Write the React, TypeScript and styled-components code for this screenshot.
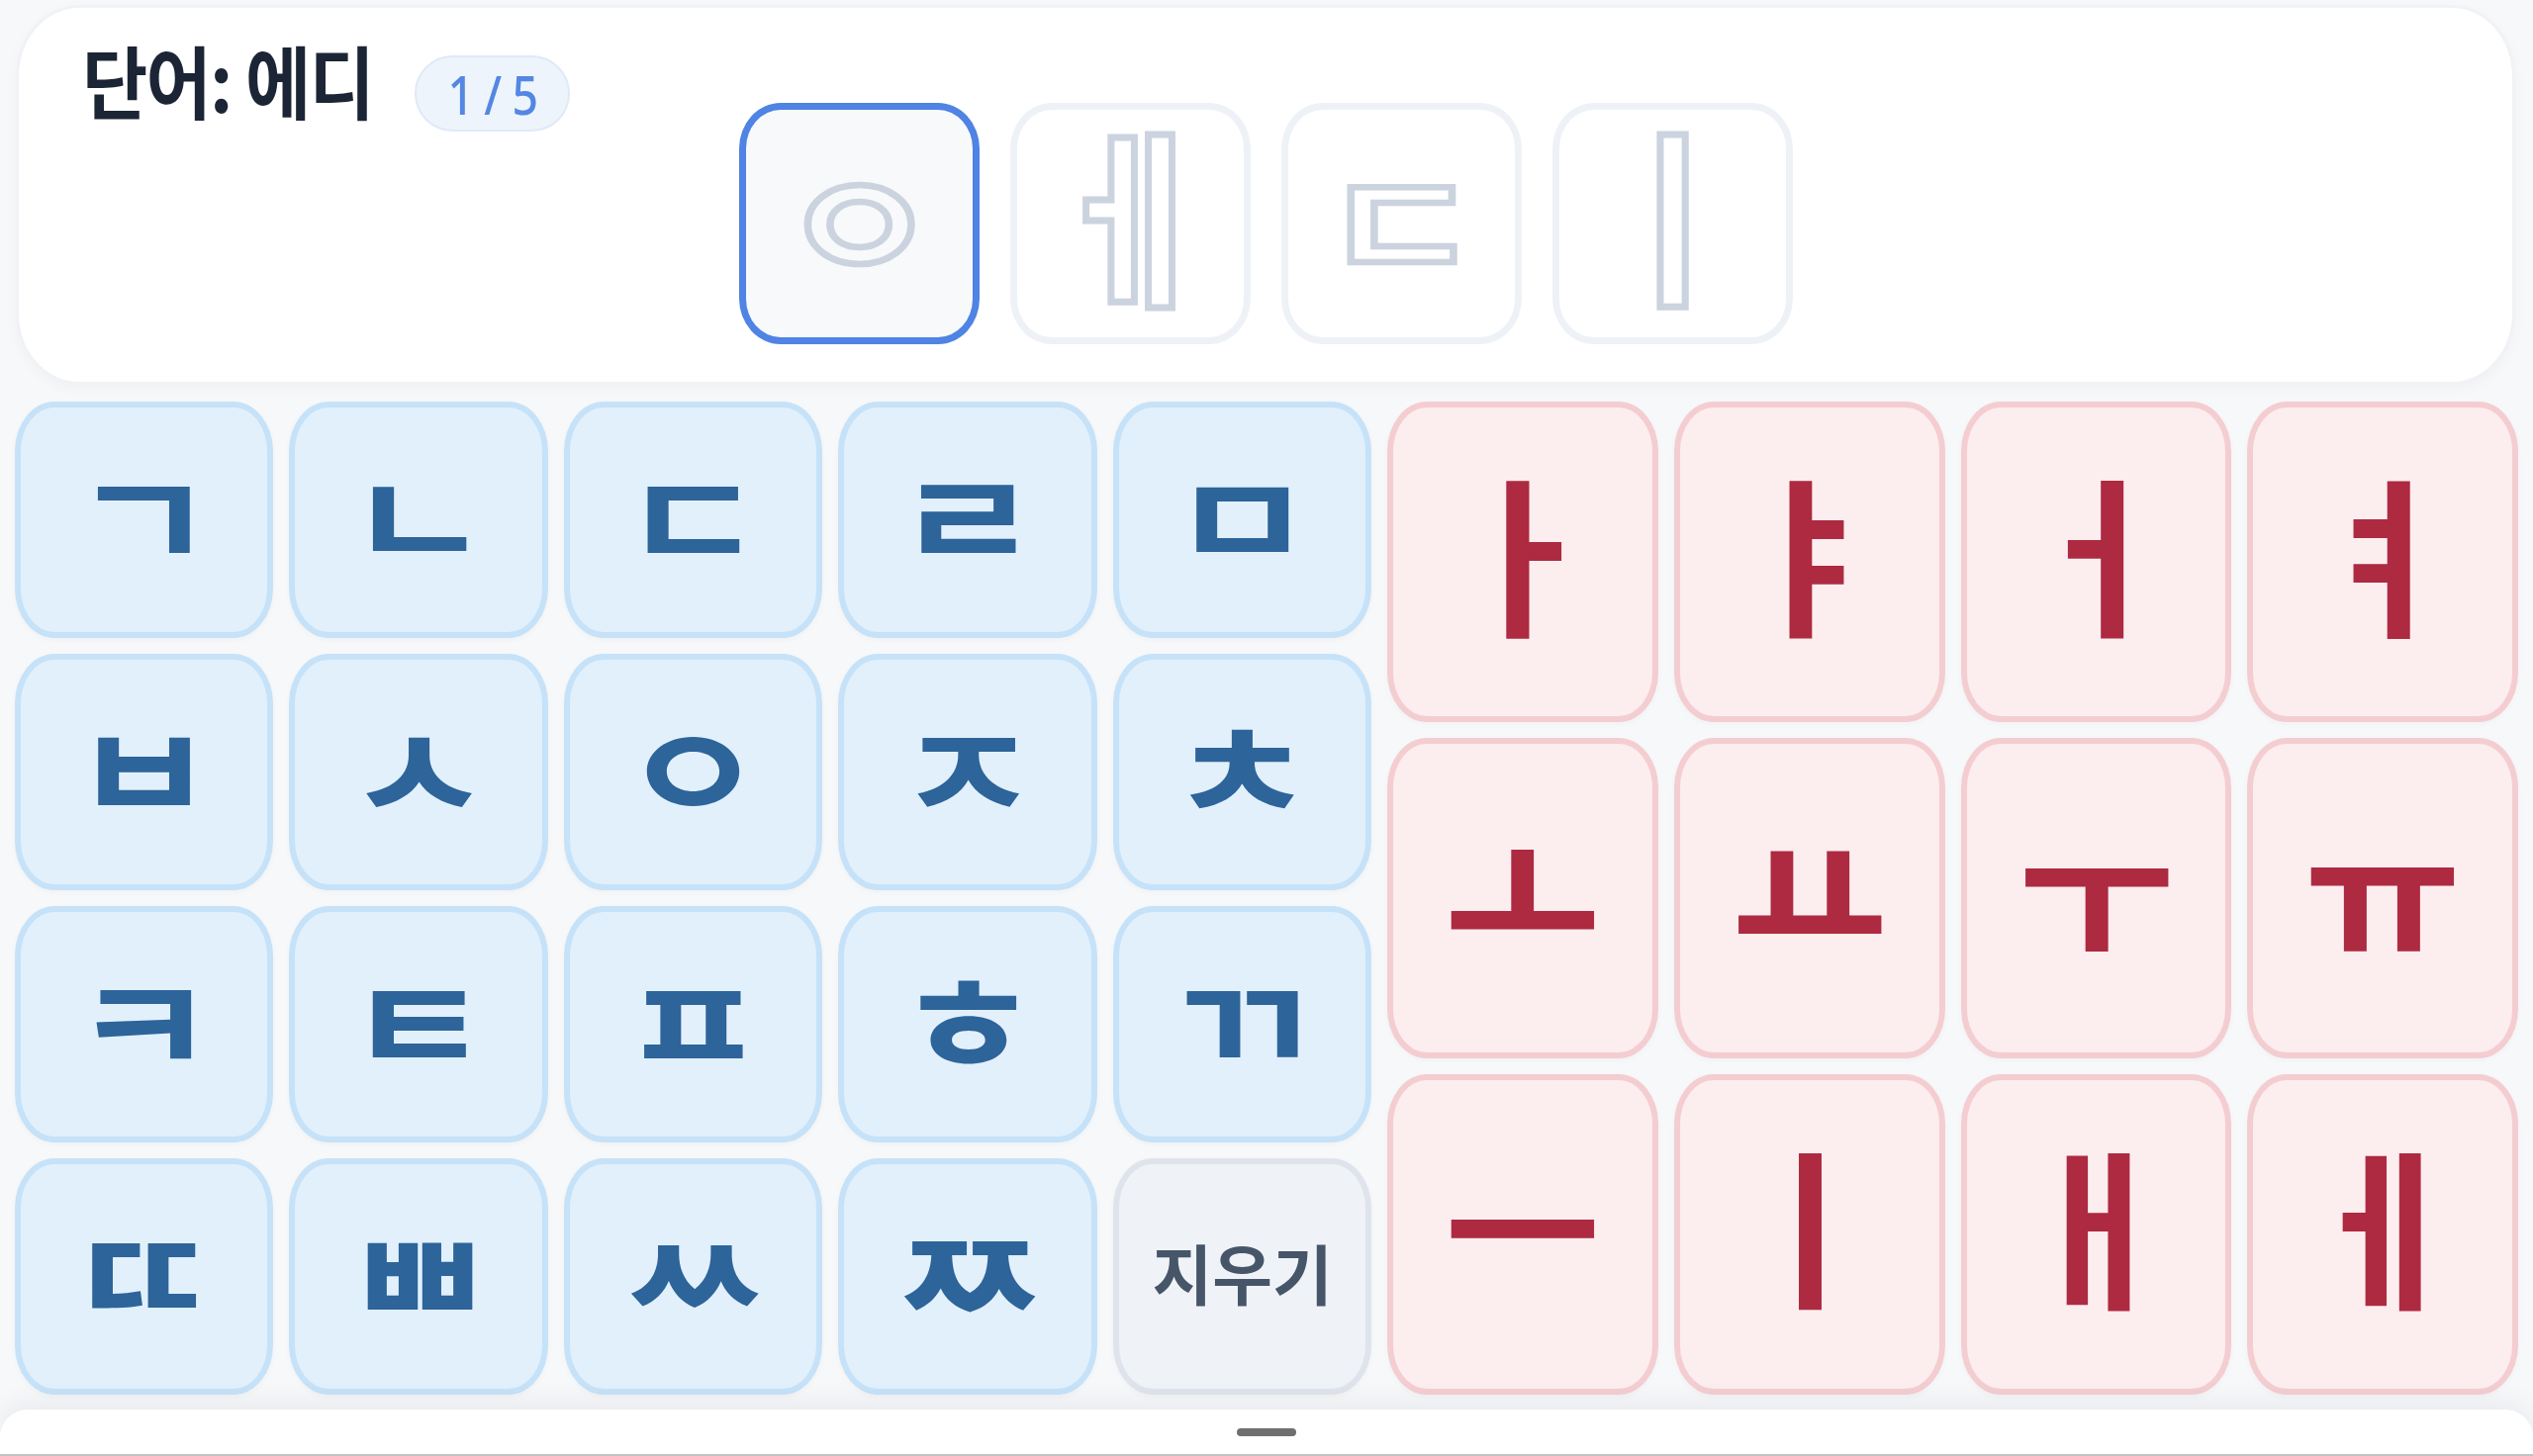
import React from "react";
import styled, { createGlobalStyle, css } from "styled-components";

const GlobalStyle = createGlobalStyle`
  html, body {
    margin: 0;
    padding: 0;
    background: #f7f8fa;
  }
  body {
    font-family: "Noto Sans CJK KR", "Noto Sans", sans-serif;
  }
  * { box-sizing: border-box; }
`;

const Screen = styled.div`
  width: 2560px;
  height: 1472px;
  display: flex;
  flex-direction: column;
  background: #f7f8fa;
  overflow: hidden;
`;

const WordCard = styled.section`
  margin: 5px 18px 0 16px;
  height: 384px;
  background: #ffffff;
  border: 3px solid #f0f2f6;
  border-radius: 64px / 72px;
  box-shadow: 0 4px 14px rgba(15, 23, 42, 0.03);
  display: grid;
  grid-template-columns: 1fr auto 1fr;
`;

const Header = styled.div`
  display: flex;
  align-items: flex-start;
  padding: 23px 0 0 64px;
`;

const Title = styled.h1`
  margin: 0 -20px 0 0;
  font-family: "Noto Sans CJK KR", sans-serif;
  font-weight: 700;
  font-size: 80px;
  line-height: 1.2;
  color: #1c2536;
  letter-spacing: -2px;
  transform: scaleX(0.9);
  transform-origin: left center;
  white-space: nowrap;
`;

const Badge = styled.span`
  margin: 25px 0 0 29px;
  height: 77px;
  padding: 0 24px;
  display: inline-flex;
  align-items: center;
  border-radius: 40px;
  background: #eef4fc;
  border: 2px solid #dfe9f8;
  color: #5487e2;
  font-family: "Noto Sans", sans-serif;
  font-size: 54px;
  font-weight: 500;
  white-space: nowrap;
  letter-spacing: -1px;
`;

const BadgeText = styled.span`
  display: inline-block;
  transform: scaleX(0.86);
`;

const Slots = styled.div`
  display: flex;
  gap: 31px;
  margin-top: 96px;
  align-self: start;
`;

const Slot = styled.div<{ $active?: boolean }>`
  width: 243px;
  height: 244px;
  border-radius: 42px / 46px;
  display: flex;
  align-items: center;
  justify-content: center;
  ${(p) =>
    p.$active
      ? css`
          border: 7px solid #4f83e4;
          background: #f7f9fb;
        `
      : css`
          border: 7px solid #eef2f7;
          background: #ffffff;
        `}
`;

const SlotGlyph = styled.span<{ $consonant?: boolean }>`
  display: inline-block;
  font-family: "Noto Sans CJK KR", sans-serif;
  font-weight: 700;
  line-height: 1;
  color: transparent;
  -webkit-text-stroke: 7px #cbd3df;
  ${(p) =>
    p.$consonant
      ? css`
          font-size: 164px;
          transform: translateY(-6px) scale(1.08, 0.92);
        `
      : css`
          font-size: 190px;
          transform: translateY(-14px);
        `}
`;

const Keyboard = styled.div`
  margin-top: 17px;
  padding: 0 15px;
  height: 1004px;
  display: grid;
  grid-template-columns: 6fr 5fr;
  gap: 16px;
`;

const KeyGrid = styled.div<{ $cols: number; $rows: number }>`
  display: grid;
  grid-template-columns: repeat(${(p) => p.$cols}, 1fr);
  grid-template-rows: repeat(${(p) => p.$rows}, 1fr);
  gap: 16px;
`;

type KeyKind = "consonant" | "vowel" | "erase";

const keyColors: Record<KeyKind, { bg: string; border: string; fg: string }> = {
  consonant: { bg: "#e2f0fc", border: "#c6e2f8", fg: "#2d6499" },
  vowel: { bg: "#fcedef", border: "#f4cdd1", fg: "#ad2a41" },
  erase: { bg: "#eff3f8", border: "#dfe4ec", fg: "#475569" },
};

const Key = styled.button<{ $kind: KeyKind }>`
  appearance: none;
  margin: 0;
  padding: 0;
  min-width: 0;
  display: flex;
  align-items: center;
  justify-content: center;
  border-radius: 40px / 50px;
  border: 6px solid ${(p) => keyColors[p.$kind].border};
  background: ${(p) => keyColors[p.$kind].bg};
  color: ${(p) => keyColors[p.$kind].fg};
  font-family: "Noto Sans CJK KR", sans-serif;
  box-shadow: 0 2px 6px rgba(15, 23, 42, 0.03);
  cursor: pointer;
`;

const KeyLabel = styled.span<{ $kind: KeyKind }>`
  display: inline-block;
  line-height: 1;
  font-weight: 700;
  ${(p) =>
    p.$kind === "consonant" &&
    css`
      font-size: 144px;
      transform: translateY(-8px) scale(1.1, 0.92);
    `}
  ${(p) =>
    p.$kind === "vowel" &&
    css`
      font-size: 178px;
      transform: translateY(-13px) scale(0.97, 0.97);
    `}
  ${(p) =>
    p.$kind === "erase" &&
    css`
      font-size: 66px;
      transform: translateY(-6px);
    `}
`;

const BottomArea = styled.div`
  flex: 1;
  display: flex;
  flex-direction: column;
  justify-content: flex-end;
`;

const Sheet = styled.div`
  height: 47px;
  background: #ffffff;
  border-radius: 28px 28px 0 0;
  border-bottom: 2px solid #c3c3c3;
  box-shadow: 0 -10px 24px rgba(15, 23, 42, 0.05);
  display: flex;
  justify-content: center;
  padding-top: 19px;
`;

const Handle = styled.div`
  width: 60px;
  height: 8px;
  border-radius: 4px;
  background: #6f6f6f;
`;

const consonants = [
  "ㄱ", "ㄴ", "ㄷ", "ㄹ", "ㅁ",
  "ㅂ", "ㅅ", "ㅇ", "ㅈ", "ㅊ",
  "ㅋ", "ㅌ", "ㅍ", "ㅎ", "ㄲ",
  "ㄸ", "ㅃ", "ㅆ", "ㅉ",
];

const vowels = ["ㅏ", "ㅑ", "ㅓ", "ㅕ", "ㅗ", "ㅛ", "ㅜ", "ㅠ", "ㅡ", "ㅣ", "ㅐ", "ㅔ"];

const slots = [
  { ch: "ㅇ", consonant: true },
  { ch: "ㅔ", consonant: false },
  { ch: "ㄷ", consonant: true },
  { ch: "ㅣ", consonant: false },
];

export default function App() {
  return (
    <>
      <GlobalStyle />
      <Screen>
        <WordCard>
          <Header>
            <Title>단어: 에디</Title>
            <Badge>
              <BadgeText>1 / 5</BadgeText>
            </Badge>
          </Header>
          <Slots>
            {slots.map((s, i) => (
              <Slot key={i} $active={i === 0}>
                <SlotGlyph $consonant={s.consonant}>{s.ch}</SlotGlyph>
              </Slot>
            ))}
          </Slots>
          <div />
        </WordCard>
        <Keyboard>
          <KeyGrid $cols={5} $rows={4}>
            {consonants.map((c) => (
              <Key key={c} $kind="consonant">
                <KeyLabel $kind="consonant">{c}</KeyLabel>
              </Key>
            ))}
            <Key $kind="erase">
              <KeyLabel $kind="erase">지우기</KeyLabel>
            </Key>
          </KeyGrid>
          <KeyGrid $cols={4} $rows={3}>
            {vowels.map((v) => (
              <Key key={v} $kind="vowel">
                <KeyLabel $kind="vowel">{v}</KeyLabel>
              </Key>
            ))}
          </KeyGrid>
        </Keyboard>
        <BottomArea>
          <Sheet>
            <Handle />
          </Sheet>
        </BottomArea>
      </Screen>
    </>
  );
}
